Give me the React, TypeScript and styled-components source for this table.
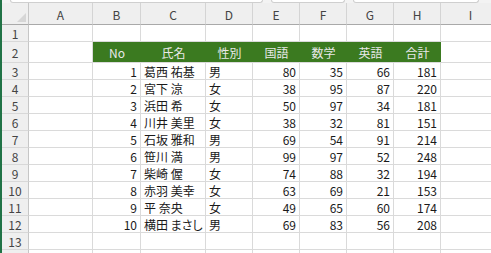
import React from "react";
import styled, { createGlobalStyle } from "styled-components";

const GlobalStyle = createGlobalStyle`
  html, body {
    margin: 0;
    padding: 0;
    background: #ffffff;
    overflow: hidden;
  }
  body {
    font-family: "Noto Sans CJK JP", "Noto Sans", sans-serif;
  }
`;

const COLS = ["A", "B", "C", "D", "E", "F", "G", "H", "I"];
const WIDTHS = [64, 48, 65, 47, 47, 47, 47, 47, 60];

interface Student {
    no: number;
    name: string;
    sex: string;
    kokugo: number;
    sugaku: number;
    eigo: number;
}

const students: Student[] = [
    { no: 1, name: "葛西 祐基", sex: "男", kokugo: 80, sugaku: 35, eigo: 66 },
    { no: 2, name: "宮下 涼", sex: "女", kokugo: 38, sugaku: 95, eigo: 87 },
    { no: 3, name: "浜田 希", sex: "女", kokugo: 50, sugaku: 97, eigo: 34 },
    { no: 4, name: "川井 美里", sex: "女", kokugo: 38, sugaku: 32, eigo: 81 },
    { no: 5, name: "石坂 雅和", sex: "男", kokugo: 69, sugaku: 54, eigo: 91 },
    { no: 6, name: "笹川 満", sex: "男", kokugo: 99, sugaku: 97, eigo: 52 },
    { no: 7, name: "柴崎 偓", sex: "女", kokugo: 74, sugaku: 88, eigo: 32 },
    { no: 8, name: "赤羽 美幸", sex: "女", kokugo: 63, sugaku: 69, eigo: 21 },
    { no: 9, name: "平 奈央", sex: "女", kokugo: 49, sugaku: 65, eigo: 60 },
    { no: 10, name: "横田 まさし", sex: "男", kokugo: 69, sugaku: 83, eigo: 56 },
];

const headers = ["No", "氏名", "性別", "国語", "数学", "英語", "合計"];

const Window = styled.div`
    width: 491px;
    height: 253px;
    overflow: hidden;
    border-left: 2px solid #217346;
    box-sizing: border-box;
    display: flex;
    flex-direction: column;
    background: #ffffff;
`;

const FormulaEdge = styled.div`
    height: 3px;
    flex: none;
    display: flex;
    gap: 8px;
    padding-left: 8px;
    background: #f3f3f3;
    overflow: hidden;
`;

const EdgeBox = styled.div<{ $w: number }>`
    width: ${(p) => p.$w}px;
    height: 3px;
    box-sizing: border-box;
    background: #ffffff;
    border: 1px solid #cfcfcf;
    border-top: none;
    border-radius: 0 0 3px 3px;
`;

const Sheet = styled.div`
    display: grid;
    grid-template-columns: 27px ${WIDTHS.map((w) => `${w}px`).join(" ")};
    grid-auto-rows: 17px;
    grid-template-rows: 22px 17px 21px;
    font-size: 12px;
    color: #1a1a1a;
`;

const Corner = styled.div`
    background: #efefef;
    border-right: 1px solid #c6c6c6;
    border-bottom: 1px solid #a9a9a9;
    box-sizing: border-box;
    display: flex;
    align-items: flex-end;
    justify-content: flex-end;
    padding: 0 2px 2px 0;
`;

const ColHead = styled.div`
    background: #efefef;
    border-right: 1px solid #d4d4d4;
    border-bottom: 1px solid #a9a9a9;
    box-sizing: border-box;
    display: flex;
    align-items: center;
    justify-content: center;
    padding-top: 2px;
    color: #444444;
    font-size: 12px;
`;

const RowHead = styled.div`
    background: #efefef;
    border-right: 1px solid #c6c6c6;
    border-bottom: 1px solid #d8d8d8;
    box-sizing: border-box;
    display: flex;
    align-items: center;
    justify-content: center;
    color: #444444;
    font-size: 12px;
`;

const Cell = styled.div<{ $align?: "left" | "right" | "center" }>`
    border-right: 1px solid #dadada;
    border-bottom: 1px solid #dadada;
    box-sizing: border-box;
    display: flex;
    align-items: center;
    padding: 0 3px;
    white-space: nowrap;
    overflow: visible;
    justify-content: ${(p) =>
        p.$align === "right" ? "flex-end" : p.$align === "center" ? "center" : "flex-start"};
`;

// names use proportional kana so long ones stay inside the column
const NameCell = styled(Cell)`
    font-feature-settings: "palt";
`;

const HeadCell = styled.div`
    background: #3b7a20;
    box-sizing: border-box;
    border-bottom: 1px solid #dadada;
    display: flex;
    align-items: center;
    justify-content: center;
    color: #e9e9e9;
    white-space: nowrap;
`;

const SelectAll = () => (
    <svg width="9" height="9" viewBox="0 0 9 9">
        <polygon points="9,0 9,9 0,9" fill="#d6d6d6" />
    </svg>
);

const EmptyCells: React.FC<{ count: number }> = ({ count }) => (
    <>
        {Array.from({ length: count }, (_, i) => (
            <Cell key={i} />
        ))}
    </>
);

const App: React.FC = () => {
    return (
        <>
            <GlobalStyle />
            <Window>
                <FormulaEdge>
                    <EdgeBox $w={253} />
                    <EdgeBox $w={74} />
                    <EdgeBox $w={126} />
                </FormulaEdge>
                <Sheet>
                    <Corner>
                        <SelectAll />
                    </Corner>
                    {COLS.map((c) => (
                        <ColHead key={c}>{c}</ColHead>
                    ))}

                    <RowHead>1</RowHead>
                    <EmptyCells count={9} />

                    {/* table header */}
                    <RowHead>2</RowHead>
                    <Cell />
                    {headers.map((h) => (
                        <HeadCell key={h}>{h}</HeadCell>
                    ))}
                    <Cell />

                    {students.map((s, i) => (
                        <React.Fragment key={s.no}>
                            <RowHead>{i + 3}</RowHead>
                            <Cell />
                            <Cell $align="right">{s.no}</Cell>
                            <NameCell>{s.name}</NameCell>
                            <Cell>{s.sex}</Cell>
                            <Cell $align="right">{s.kokugo}</Cell>
                            <Cell $align="right">{s.sugaku}</Cell>
                            <Cell $align="right">{s.eigo}</Cell>
                            <Cell $align="right">{s.kokugo + s.sugaku + s.eigo}</Cell>
                            <Cell />
                        </React.Fragment>
                    ))}

                    <RowHead>13</RowHead>
                    <EmptyCells count={9} />
                    <RowHead />
                    <EmptyCells count={9} />
                </Sheet>
            </Window>
        </>
    );
};

export default App;
